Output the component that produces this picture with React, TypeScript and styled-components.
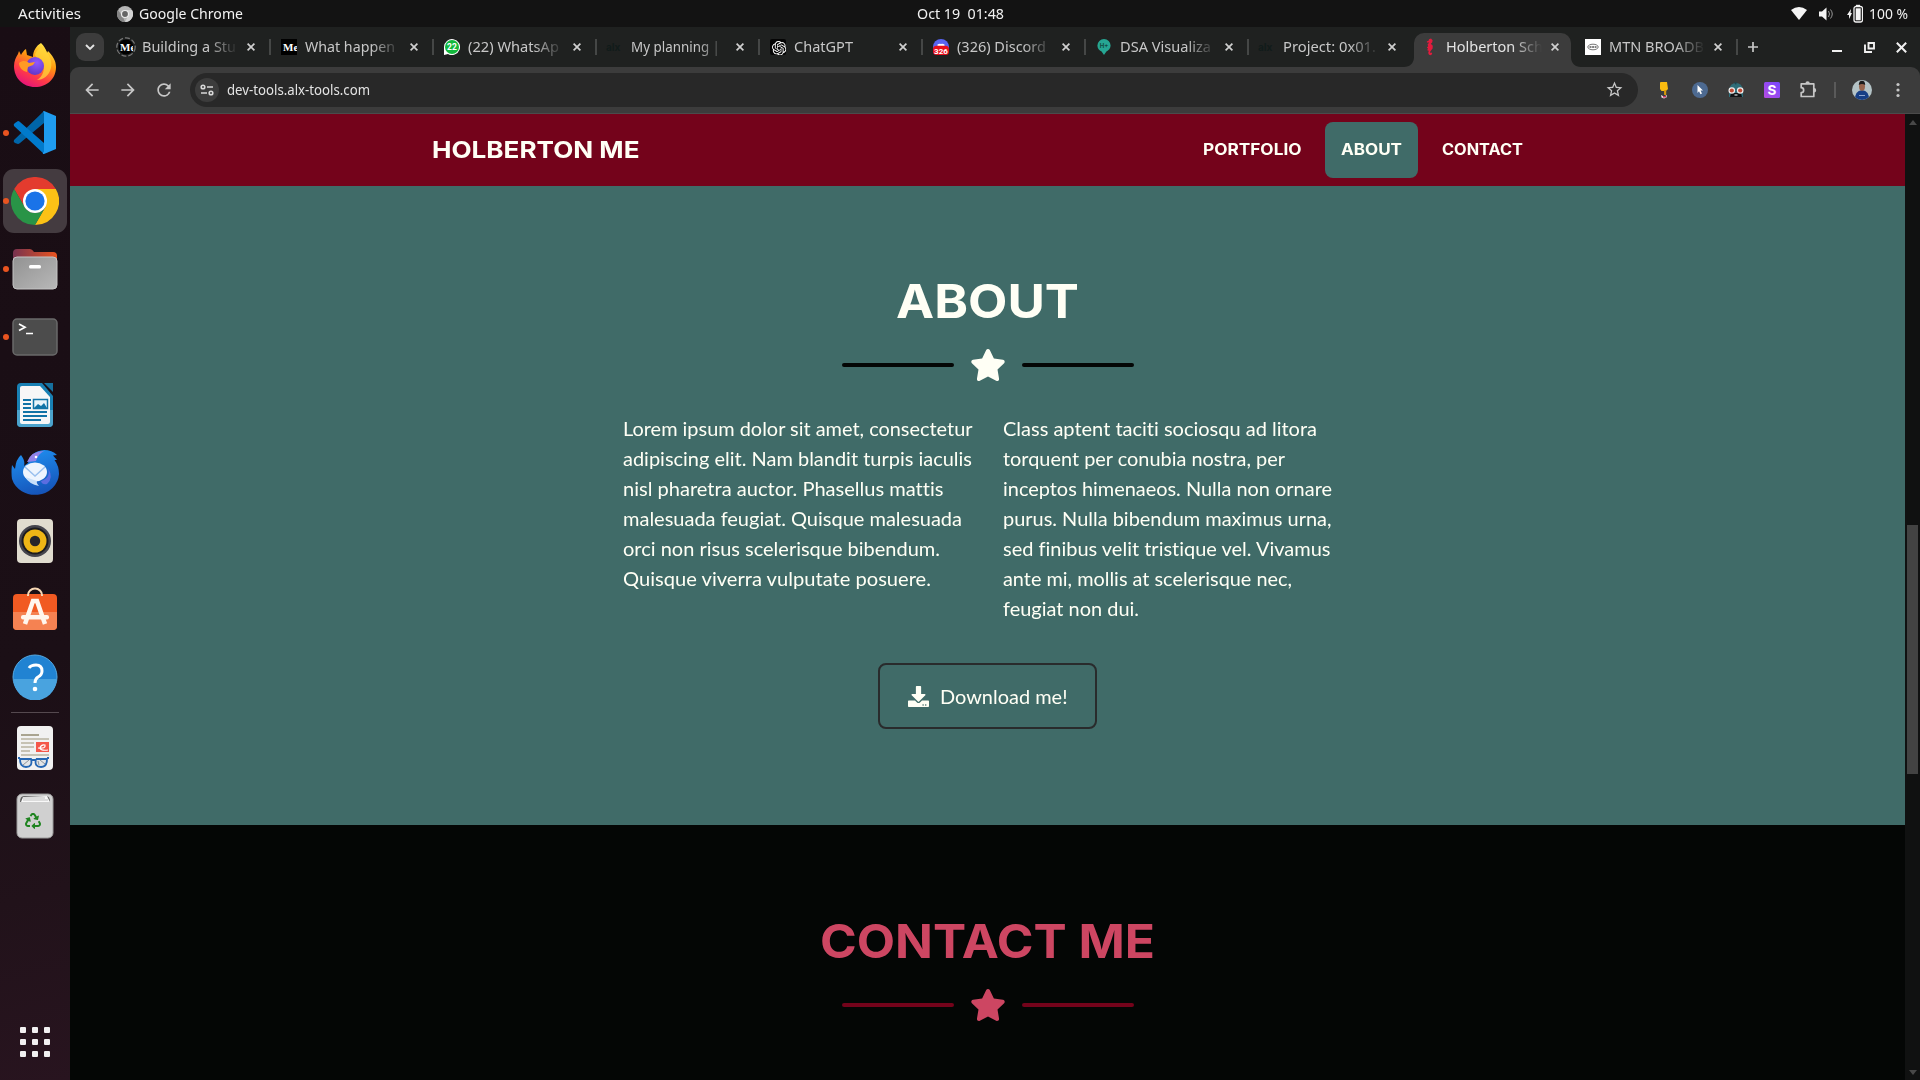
import React, { useLayoutEffect, useRef } from "react";
import styled, { createGlobalStyle } from "styled-components";
import { FaStar, FaDownload, FaRecycle } from "react-icons/fa";
import { SiOpenai } from "react-icons/si";
import { MdStarBorder, MdArrowBack, MdArrowForward, MdRefresh } from "react-icons/md";

const UI = `"Noto Sans", "Open Sans", sans-serif`;
const HEAD = `Inter, "Open Sans", sans-serif`;

const Global = createGlobalStyle`
  *, *::before, *::after { box-sizing: border-box; }
  body { margin: 0; background: #040605; overflow: hidden; font-family: ${UI}; }
  svg { display: block; flex: none; }
`;

/* Text set to an exact advance width, whatever face is available. */
const FitBox = styled.span<{ $w: number }>`
  display: block;
  flex: none;
  width: ${(p) => p.$w}px;
  white-space: pre;
`;
const FitText = styled.span`
  display: inline-block;
  transform-origin: 0 50%;
`;
function Fit({ w, children }: { w: number; children: React.ReactNode }) {
  const ref = useRef<HTMLSpanElement>(null);
  useLayoutEffect(() => {
    const el = ref.current;
    if (el && el.offsetWidth) {
      el.style.transform = "none";
      el.style.transform = `scaleX(${w / el.getBoundingClientRect().width})`;
    }
  }, [w]);
  return (
    <FitBox $w={w}>
      <FitText ref={ref}>{children}</FitText>
    </FitBox>
  );
}

const Desktop = styled.div`
  width: 1920px;
  height: 1080px;
  display: grid;
  grid-template: 27px 1053px / 70px 1850px;
`;

/* ---------- system panel ---------- */
const Panel = styled.header`
  grid-column: 1 / 3;
  display: grid;
  grid-template-columns: 1fr 87px 1fr;
  align-items: center;
  background: #131313;
  color: #f2f2f2;
  font-size: 14.4px;
  line-height: 26px;
`;
const PanelLeft = styled.div`
  display: flex;
  align-items: center;
  padding-left: 18px;
`;
const PanelApp = styled.div`
  display: flex;
  align-items: center;
  gap: 6px;
  margin-left: 36px;
`;
const PanelRight = styled.div`
  display: flex;
  align-items: center;
  justify-content: flex-end;
  padding-right: 12px;
`;
const PanelIcon = styled.span<{ $gap: number }>`
  margin-right: ${(p) => p.$gap}px;
`;

/* ---------- dock ---------- */
const Dock = styled.nav`
  display: flex;
  flex-direction: column;
  align-items: center;
  padding: 6px 0 17px;
  background: linear-gradient(165deg, #190d14 0%, #1b0f16 60%, #21121a 82%, #28141f 100%);
`;
const DockItem = styled.div<{ $active?: boolean; $running?: boolean }>`
  position: relative;
  flex: none;
  display: flex;
  align-items: center;
  justify-content: center;
  width: 64px;
  height: 64px;
  margin-bottom: 4px;
  border-radius: 11px;
  background: ${(p) => (p.$active ? "#443b40" : "transparent")};
  &::before {
    content: "";
    display: ${(p) => (p.$running ? "block" : "none")};
    position: absolute;
    left: 0;
    top: 29px;
    width: 6px;
    height: 6px;
    border-radius: 50%;
    background: #e95420;
  }
`;
const DockRule = styled.div`
  width: 48px;
  height: 1px;
  margin: -1px 0 3px;
  background: #55494f;
`;
const AppGrid = styled.div`
  display: grid;
  grid-template-columns: repeat(3, 6px);
  gap: 6px;
  margin-top: auto;
  margin-bottom: 6px;
`;
const AppDot = styled.i`
  width: 6px;
  height: 6px;
  border-radius: 1px;
  background: #f2f0f1;
`;

/* ---------- browser ---------- */
const Browser = styled.main`
  display: flex;
  flex-direction: column;
  min-width: 0;
  background: #1f2120;
`;
const TabStrip = styled.div`
  display: flex;
  height: 40px;
  padding: 0 0 0 6px;
`;
const TabSearch = styled.div`
  display: flex;
  align-items: center;
  justify-content: center;
  width: 28px;
  height: 28px;
  margin: 6px 3px 0 0;
  border-radius: 9px;
  background: #3c3c3c;
`;
const TabBox = styled.div<{ $active?: boolean; $sep?: boolean }>`
  position: relative;
  flex: none;
  display: flex;
  align-items: center;
  width: 163px;
  height: 40px;
  padding: 0 12px 0 11px;
  color: ${(p) => (p.$active ? "#e3e3e3" : "#c7c7c7")};
  font-size: 14.4px;
  line-height: 20px;
  &::after {
    content: "";
    display: ${(p) => (p.$sep ? "block" : "none")};
    position: absolute;
    right: -1px;
    top: 12px;
    width: 2px;
    height: 16px;
    background: #454746;
  }
`;
const ActiveShape = styled.svg`
  position: absolute;
  left: -7px;
  top: 6px;
`;
const Favicon = styled.span`
  position: relative;
  flex: none;
  display: flex;
  align-items: center;
  justify-content: center;
  width: 16px;
  height: 16px;
  overflow: visible;
`;
const TabTitle = styled.span`
  position: relative;
  flex: none;
  width: 100px;
  margin-left: 8px;
  overflow: hidden;
  mask-image: linear-gradient(90deg, #000 66px, transparent 96px);
`;
const TabClose = styled.span`
  position: relative;
  margin-left: 5px;
`;
const StripEnd = styled.div`
  display: flex;
  align-items: center;
  flex: 1;
  padding-left: 9px;
`;
const WindowButtons = styled.div`
  display: flex;
  align-items: center;
  gap: 21px;
  margin-left: auto;
  padding-right: 13px;
`;
const Toolbar = styled.div`
  display: flex;
  align-items: center;
  height: 47px;
  padding: 0 12px 1px 12px;
  border-bottom: 1px solid #4b4b4b;
  border-radius: 9px 9px 0 0;
  background: #3c3c3c;
`;
const NavButtons = styled.div`
  flex: none;
  display: flex;
  gap: 16px;
  width: 108px;
  color: #c7c7c7;
`;
const Omnibox = styled.div`
  flex: none;
  display: flex;
  align-items: center;
  width: 1448px;
  height: 34px;
  padding: 0 14px 0 5px;
  border-radius: 17px;
  background: #282828;
  color: #e3e3e3;
  font-size: 14.4px;
  line-height: 20px;
`;
const SiteChip = styled.span`
  display: flex;
  align-items: center;
  justify-content: center;
  width: 24px;
  height: 24px;
  margin-right: 8px;
  border-radius: 50%;
  background: #3c3c3c;
`;
const Bookmark = styled.span`
  margin-left: auto;
  color: #c7c7c7;
`;
const Extensions = styled.div`
  display: flex;
  align-items: center;
  gap: 16px;
  margin-left: 16px;
`;
const ToolRule = styled.i`
  width: 2px;
  height: 16px;
  background: #5a5a5a;
`;
const Viewport = styled.div`
  flex: 1;
  display: grid;
  grid-template-columns: 1835px 15px;
  min-height: 0;
`;
const ScrollTrack = styled.div`
  display: flex;
  flex-direction: column;
  align-items: center;
  background: #101111;
`;
const ScrollArrow = styled.i<{ $down?: boolean }>`
  margin-top: ${(p) => (p.$down ? "auto" : "6px")};
  margin-bottom: ${(p) => (p.$down ? "5px" : "0")};
  border: 4px solid transparent;
  border-top: ${(p) => (p.$down ? "5px solid #484848" : "0")};
  border-bottom: ${(p) => (p.$down ? "0" : "5px solid #484848")};
`;
const ScrollThumb = styled.i`
  width: 11px;
  height: 249px;
  margin-top: 400px;
  background: #434343;
`;

/* ---------- page ---------- */
const Page = styled.div`
  display: flex;
  flex-direction: column;
  overflow: hidden;
  background: #040605;
  color: #fffff5;
`;
const SiteNav = styled.header`
  display: flex;
  align-items: center;
  justify-content: space-between;
  height: 72px;
  padding: 0 366px 0 362px;
  background: #74031b;
  font-family: ${HEAD};
  font-weight: 700;
`;
const Brand = styled.div`
  font-size: 23.4px;
  line-height: 36px;
  margin-bottom: 1px;
`;
const NavLinks = styled.div`
  display: flex;
  gap: 8px;
`;
const NavLink = styled.a<{ $on?: boolean }>`
  display: flex;
  align-items: center;
  height: 56px;
  padding: 0 16px 2px;
  border-radius: 8px;
  background: ${(p) => (p.$on ? "#406b68" : "transparent")};
  font-size: 15.6px;
`;
const Section = styled.section<{ $bg: string; $fg: string; $h: number; $top: number }>`
  display: flex;
  flex-direction: column;
  align-items: center;
  flex: none;
  height: ${(p) => p.$h}px;
  padding-top: ${(p) => p.$top}px;
  background: ${(p) => p.$bg};
  color: ${(p) => p.$fg};
`;
const Heading = styled.h2`
  margin: 0;
  font-family: ${HEAD};
  font-size: 46.500px;
  font-weight: 700;
  line-height: 58px;
`;
const Divider = styled.div`
  display: flex;
  align-items: center;
  gap: 16px;
  height: 36px;
  margin-top: 17px;
`;
const Bar = styled.i<{ $c: string }>`
  width: 112px;
  height: 4px;
  border-radius: 2px;
  background: ${(p) => p.$c};
`;
const Columns = styled.div`
  display: grid;
  grid-template-columns: 356px 356px;
  gap: 24px;
  width: 736px;
  margin: 30px 0 40px 6px;
  font: 400 20px/30px Lato, sans-serif;
  font-variant-ligatures: none;
`;
const Para = styled.p`
  margin: 0;
`;
const Download = styled.a`
  display: flex;
  align-items: center;
  gap: 11px;
  height: 66px;
  width: 219px;
  padding-left: 28px;
  border: 2px solid #292b2c;
  border-radius: 8px;
  font: 400 20px/30px Lato, sans-serif;
`;

const Med = ({ ring }: { ring?: boolean }) => (
  <svg width={ring ? 20 : 16} height={ring ? 20 : 16} viewBox={ring ? "-2 -2 20 20" : "0 0 16 16"}>
    <clipPath id={ring ? "medR" : "medS"}>
      <rect x={ring ? 1 : 0} width={ring ? 14 : 16} height="16" />
    </clipPath>
    {ring && <circle cx="8" cy="8" r="9.200" fill="none" stroke="#777" strokeWidth="1.200" strokeDasharray="5 2" />}
    {ring ? <circle cx="8" cy="8" r="7.500" fill="#000" /> : <rect width="16" height="16" fill="#000" />}
    <g clipPath={ring ? "url(#medR)" : "url(#medS)"}>
      <text x="2" y="12" fontFamily="Liberation Serif, serif" fontWeight="700" fontSize="11" fill="#fff">
        Me
      </text>
    </g>
  </svg>
);
const Alx = () => (
  <svg width="20" height="16" viewBox="0 0 20 16">
    <text x="1" y="12" fontFamily="Inter, sans-serif" fontWeight="700" fontSize="10" fill="#111b1a">
      alx
    </text>
  </svg>
);
const WhatsApp = () => (
  <svg width="16" height="16" viewBox="0 0 16 16">
    <path d="M0 16V8a8 8 0 1 1 4 7z" fill="#fff" />
    <circle cx="8" cy="8" r="7" fill="#12b83c" />
    <text x="8" y="11" textAnchor="middle" fontFamily="Roboto, sans-serif" fontWeight="700" fontSize="8.500" fill="#fff">
      22
    </text>
  </svg>
);
const Gpt = () => (
  <svg width="16" height="16" viewBox="0 0 16 16">
    <rect width="16" height="16" rx="2" fill="#050505" />
    <SiOpenai x="2" y="2" width="12" height="12" color="#fff" />
  </svg>
);
const Discord = () => (
  <svg width="16" height="18" viewBox="0 0 16 18">
    <circle cx="8" cy="9" r="8" fill="#5865f2" />
    <path d="M4.500 6.500q1.500-1 3.500-.6 2-.4 3.500.6V9h-7z" fill="#fff" />
    <rect y="7.800" width="16" height="9.200" rx="3.500" fill="#e8101c" />
    <text x="8" y="15.500" textAnchor="middle" fontFamily="Roboto, sans-serif" fontWeight="700" fontSize="8" fill="#fff">
      326
    </text>
  </svg>
);
const Dsa = () => (
  <svg width="14" height="16" viewBox="0 0 14 16">
    <path d="M7 0a6.600 6.600 0 0 1 6.600 6.600c0 3-2 4.900-4.200 6L7 16l-2.400-3.400C2.200 11.500.4 9.600.4 6.600A6.600 6.600 0 0 1 7 0z" fill="#26a693" />
    <text x="7" y="9" textAnchor="middle" fontFamily="Inter, sans-serif" fontWeight="700" fontSize="6" fill="#124a42">
      H+
    </text>
  </svg>
);
const Seahorse = () => (
  <svg width="8" height="18" viewBox="0 0 8 18">
    <path
      d="M3 1.200 5 .6 6.600 2.200 6.200 4.600 4.800 5.800 6.800 7.800 6.600 10.400 5 12.400 4 14 4.600 15 5.800 14.600 6.200 15.800 5 17.200 3 16.800 2.200 15 2.800 12.800 1.200 12.200 2 10.600.8 9.400 2.200 8.200 1.600 6.400 3.200 4.600 1 4.400.8 3.400 2.600 2.800z"
      fill="#e31b3d"
    />
  </svg>
);
const Mtn = () => (
  <svg width="16" height="16" viewBox="0 0 16 16">
    <rect width="16" height="16" fill="#fff" />
    <ellipse cx="8" cy="8" rx="5.200" ry="2.800" fill="none" stroke="#777" />
    <path d="M4.500 8h7" stroke="#555" strokeWidth="1.600" strokeDasharray="2 .6" />
  </svg>
);

type TabData = { icon: React.ReactNode; title: string; w: number; active?: boolean; nosep?: boolean };
const TABS: TabData[] = [
  { icon: <Med ring />, title: "Building a Stu", w: 94 },
  { icon: <Med />, title: "What happen", w: 90 },
  { icon: <WhatsApp />, title: "(22) WhatsAp", w: 91 },
  { icon: <Alx />, title: "My planning |", w: 89 },
  { icon: <Gpt />, title: "ChatGPT", w: 59 },
  { icon: <Discord />, title: "(326) Discord", w: 89 },
  { icon: <Dsa />, title: "DSA Visualiza", w: 91 },
  { icon: <Alx />, title: "Project: 0x01.", w: 93, nosep: true },
  { icon: <Seahorse />, title: "Holberton Sch", w: 97, active: true, nosep: true },
  { icon: <Mtn />, title: "MTN BROADB", w: 95 },
];

const Cross = ({ s = 8, sw = 1.7, c = "#d0d0d0" }: { s?: number; sw?: number; c?: string }) => (
  <svg width={s} height={s} viewBox="0 0 8 8">
    <path d="M.6.6l6.800 6.800M7.400.6L.6 7.400" stroke={c} strokeWidth={(sw * 8) / s} />
  </svg>
);

function Tab({ t }: { t: TabData }) {
  return (
    <TabBox $active={t.active} $sep={!t.nosep}>
      {t.active && (
        <ActiveShape width="177" height="34" viewBox="0 0 177 34">
          <path d="M0 34C6 34 10 30 10 24V10A10 10 0 0 1 20 0H157A10 10 0 0 1 167 10V24C167 30 171 34 177 34Z" fill="#3c3c3c" />
        </ActiveShape>
      )}
      <Favicon>{t.icon}</Favicon>
      <TabTitle>
        <Fit w={t.w}>{t.title}</Fit>
      </TabTitle>
      <TabClose>
        <Cross />
      </TabClose>
    </TabBox>
  );
}

/* ---------- dock artwork ---------- */
const Firefox = () => (
  <svg width="44" height="44" viewBox="0 0 44 44">
    <defs>
      <linearGradient id="ffA" x1=".8" y1="0" x2=".3" y2="1">
        <stop offset="0" stopColor="#fff44f" />
        <stop offset=".4" stopColor="#ff980e" />
        <stop offset=".72" stopColor="#ff3b47" />
        <stop offset="1" stopColor="#e5127d" />
      </linearGradient>
      <radialGradient id="ffB" cx=".6" cy=".3" r=".8">
        <stop offset="0" stopColor="#9059ff" />
        <stop offset="1" stopColor="#5b32c0" />
      </radialGradient>
    </defs>
    <path d="M28 0c3 3 5 6 6 10l1-2c4 4 8 9 8 16 0 12-9 20-21 20S1 35 1 23c0-5 2-9 4-12l1-3 2 4c1-2 3-5 5-6l1 6 6 2c0-6 3-11 8-14z" fill="url(#ffA)" />
    <path d="M30 4c5 5 10 14 8 21-2 8-8 12-14 12 6-4 8-10 6-16-3-4-7-6-8-9 1-4 4-7 8-8z" fill="#ffd53a" opacity=".75" />
    <circle cx="22" cy="23" r="9" fill="url(#ffB)" />
    <path d="M6 20c4-3 8-2 10 0l6-1-2 3-5 2-1 5C9 28 6 24 6 20z" fill="#ff9a24" />
  </svg>
);
const VsCode = () => (
  <svg width="44" height="44" viewBox="0 0 44 44">
    <path d="M1 29q-1 2 1 3l3 1q1 0 2-1L31 12V0L1 29z" fill="#0065a9" />
    <path d="M1 15q-1-2 1-3l3-2q1 0 2 1L31 32v11L1 15z" fill="#007acc" />
    <path d="M31 0 43 5V38L31 43C29 43 30 41 31 41V2C30 1 30 0 31 0z" fill="#1f9cf0" />
  </svg>
);
const Chrome = () => (
  <svg width="48" height="48" viewBox="0 0 48 48">
    <path d="M24 24 3.200 12A24 24 0 0 1 44.800 12Z" fill="#e33b2e" />
    <path d="M24 12H44.800A24 24 0 0 1 24 48L34.400 30Z" fill="#fbc116" />
    <path d="M3.200 12 13.600 30 24 24V12Z" fill="#e33b2e" />
    <path d="M3.200 12 13.600 30A12 12 0 0 0 34.400 30L24 48A24 24 0 0 1 3.200 12Z" fill="#299447" />
    <circle cx="24" cy="24" r="12" fill="#fff" />
    <circle cx="24" cy="24" r="9.600" fill="#1a73e8" />
  </svg>
);
const Files = () => (
  <svg width="46" height="42" viewBox="0 0 46 42">
    <defs>
      <linearGradient id="flA" x2="1">
        <stop offset="0" stopColor="#77324f" />
        <stop offset="1" stopColor="#e95420" />
      </linearGradient>
      <linearGradient id="flB" x2="1" y2="1">
        <stop offset="0" stopColor="#929292" />
        <stop offset="1" stopColor="#b8b8b8" />
      </linearGradient>
    </defs>
    <path d="M1 5q0-4 4-4h13q2 0 4 3h19q4 0 4 4v14H1z" fill="url(#flA)" />
    <rect x="1" y="9" width="44" height="32" rx="4" fill="url(#flB)" stroke="#c4c4c4" />
    <rect x="17" y="17" width="12" height="3.500" rx="1.500" fill="#fff" />
  </svg>
);
const Terminal = () => (
  <svg width="46" height="38" viewBox="0 0 46 38">
    <rect x="1" y="1" width="44" height="36" rx="4" fill="#4c4c4c" stroke="#6a6a6a" strokeWidth="1.500" />
    <path d="m7 6 6 3.200-6 3.200M14 15.500h7" fill="none" stroke="#fff" strokeWidth="1.700" />
  </svg>
);
const Writer = () => (
  <svg width="38" height="46" viewBox="0 0 38 46">
    <path d="M5 1H26L37 14V41Q37 45 33 45H5Q1 45 1 41V5Q1 1 5 1Z" fill="#1880b4" />
    <path d="M1 28H37V41Q37 45 33 45H5Q1 45 1 41Z" fill="#4ba3cc" />
    <path d="M28 1H37V10Z" fill="#16719f" />
    <path d="M6 4H24L34 15V40Q34 42 32 42H6Q4 42 4 40V6Q4 4 6 4Z" fill="#f7f7f7" />
    <path d="M7 18h8M7 22h8M7 26h8M7 30h24M7 34h24M7 38h18" stroke="#1173a6" strokeWidth="2" />
    <rect x="17.500" y="17.500" width="14" height="9" fill="#e9f4fa" stroke="#1173a6" strokeWidth="1.500" />
    <path d="m18 26 4-4 3 2 3-3 3 5z" fill="#1173a6" />
  </svg>
);
const Thunderbird = () => (
  <svg width="48" height="46" viewBox="0 0 48 46">
    <defs>
      <linearGradient id="tbA" x1=".3" y1="0" x2=".6" y2="1">
        <stop offset="0" stopColor="#1f8ff0" />
        <stop offset="1" stopColor="#1553b8" />
      </linearGradient>
    </defs>
    <path
      d="M10 5C13 9 14 12 13 16L17 13Q20 1 33 0Q41 0 46 5L42 5.500 46 10 43.500 10Q48 16 48 24A24 22 0 0 1 1 29Q0 22 1 15L4 19Q5 9 10 5z"
      fill="url(#tbA)"
    />
    <path d="M16 12Q20 1 33 1q-6 3-8 10z" fill="#9283e8" />
    <circle cx="25" cy="7" r="1.300" fill="#fff" />
    <path d="M30 31q10-3 7-13 6 10-1 16-5 1-6-3z" fill="#5b6de0" />
    <ellipse cx="24" cy="22" rx="12" ry="9.500" fill="#eef5fe" />
    <path d="M14 27q4 7 14 9-3-3-2-5z" fill="#c8e0fa" />
    <path d="m14 17 10 9 10-9" fill="none" stroke="#9ac0ee" strokeWidth="1.500" />
  </svg>
);
const Rhythmbox = () => (
  <svg width="38" height="46" viewBox="0 0 38 46">
    <rect x="1" y="1" width="36" height="44" rx="4" fill="#e0dccf" />
    <circle cx="19" cy="23" r="16" fill="#45454d" />
    <circle cx="19" cy="23" r="13.500" fill="#1c1c20" />
    <circle cx="19" cy="23" r="11.500" fill="#eeb616" />
    <circle cx="19" cy="23" r="5.200" fill="#26262a" />
  </svg>
);
const Software = () => (
  <svg width="46" height="44" viewBox="0 0 46 44">
    <rect x="1" y="7" width="44" height="36" rx="4" fill="#f15a22" />
    <path d="M1 25H45V39Q45 43 41 43H5Q1 43 1 39Z" fill="#f58252" />
    <path d="M16 9V8a7 6.500 0 0 1 14 0v1" fill="none" stroke="#f7d7b4" strokeWidth="2" />
    <path d="M13 37 21 14h4l8 23" fill="none" stroke="#fff6ee" strokeWidth="4.500" />
    <rect x="9" y="28" width="28" height="4.500" rx="2" fill="#fff6ee" />
  </svg>
);
const Help = () => (
  <svg width="46" height="46" viewBox="0 0 46 46">
    <circle cx="23" cy="23" r="22" fill="#2183d2" stroke="#55a9e2" />
    <path d="M1.500 25H44.500A21.500 21.500 0 0 1 1.500 25z" fill="#49a3df" />
    <path d="M17 14q2-3 7-3 6 0 6 6 0 4-4 6-3 2-3 6" fill="none" stroke="#fff" strokeWidth="3" />
    <circle cx="23" cy="35" r="2.300" fill="#fff" />
  </svg>
);
const Evince = () => (
  <svg width="38" height="46" viewBox="0 0 38 46">
    <rect x="1" y="1" width="36" height="44" rx="4" fill="#f1f1f1" />
    <path d="M5 10h18" stroke="#a9a490" strokeWidth="2" />
    <path d="M5 14h28M5 18h13M5 22h13M5 26h9M5 30h28" stroke="#c6c2b4" strokeWidth="2" />
    <rect x="20" y="17" width="13" height="10" fill="#f4574a" />
    <path d="M22 23q8 1 7-3-4-1-5 3 1 3 8 2" fill="none" stroke="#fff" strokeWidth="1.200" />
    <path
      d="M4 34h11q2 8-5 8-6 0-6-8M20 34h11q0 8-6 8-7 0-5-8M15 35h5M2 33h2M31 33h2"
      fill="#d8dde2"
      fillOpacity=".6"
      stroke="#2567b4"
      strokeWidth="1.800"
    />
    <path d="m7 40 6-5M23 40l-1-4M24 35l5 4" stroke="#8d949b" strokeWidth="1" />
  </svg>
);
const Trash = () => (
  <svg width="38" height="46" viewBox="0 0 38 46">
    <rect x="1" y="1" width="36" height="44" rx="5" fill="#d0d0d0" stroke="#9b9b9b" />
    <path d="M4 9q0-6 4-6h22q4 0 4 6z" fill="#5f5f5f" />
    <path d="M5 9l2-5 24-1 3 6z" fill="#f8f8f8" />
    <path d="M7 5h22M7 7h25" stroke="#aaa" strokeWidth=".7" />
    <FaRecycle x="9" y="20" width="20" height="20" color="#1f8420" />
  </svg>
);

const DOCK = [
  { icon: <Firefox /> },
  { icon: <VsCode />, running: true },
  { icon: <Chrome />, running: true, active: true },
  { icon: <Files />, running: true },
  { icon: <Terminal />, running: true },
  { icon: <Writer /> },
  { icon: <Thunderbird /> },
  { icon: <Rhythmbox /> },
  { icon: <Software /> },
  { icon: <Help /> },
];

const LEFT_LINES: [string, number][] = [
  ["Lorem ipsum dolor sit amet, consectetur", 349.5],
  ["adipiscing elit. Nam blandit turpis iaculis", 349],
  ["nisl pharetra auctor. Phasellus mattis", 320.5],
  ["malesuada feugiat. Quisque malesuada", 339],
  ["orci non risus scelerisque bibendum.", 317],
  ["Quisque viverra vulputate posuere.", 308],
];
const RIGHT_LINES: [string, number][] = [
  ["Class aptent taciti sociosqu ad litora", 314],
  ["torquent per conubia nostra, per", 282],
  ["inceptos himenaeos. Nulla non ornare", 329],
  ["purus. Nulla bibendum maximus urna,", 328.5],
  ["sed finibus velit tristique vel. Vivamus", 327.5],
  ["ante mi, mollis at scelerisque nec,", 289],
  ["feugiat non dui.", 136],
];
const Lines = ({ rows }: { rows: [string, number][] }) => (
  <Para>
    {rows.map(([text, w]) => (
      <Fit key={text} w={w}>
        {text}
      </Fit>
    ))}
  </Para>
);

const TitleRow = ({ text, w, bar }: { text: string; w: number; bar: string }) => (
  <>
    <Heading>
      <Fit w={w}>{text}</Fit>
    </Heading>
    <Divider>
      <Bar $c={bar} />
      <FaStar size={36} />
      <Bar $c={bar} />
    </Divider>
  </>
);

export default function App() {
  return (
    <>
      <Global />
      <Desktop>
        <Panel>
          <PanelLeft>
            <Fit w={63}>Activities</Fit>
            <PanelApp>
              <svg width="16" height="16" viewBox="0 0 16 16">
                <circle cx="8" cy="8" r="8" fill="#b5b5b5" />
                <path d="M1 4 6 11 8 16A8 8 0 0 1 1 4z" fill="#858585" />
                <path d="M8 4h7a8 8 0 0 1-7 12l3-6z" fill="#d4d4d4" />
                <circle cx="8" cy="8" r="3.500" fill="#666" stroke="#eee" strokeWidth="1.200" />
              </svg>
              <Fit w={104}>Google Chrome</Fit>
            </PanelApp>
          </PanelLeft>
          <Fit w={87}>Oct 19  01:48</Fit>
          <PanelRight>
            <PanelIcon $gap={12}>
              <svg width="16" height="13" viewBox="0 0 16 13">
                <path d="M0 3Q8-3 16 3L8 13z" fill="#f4f4f4" />
              </svg>
            </PanelIcon>
            <PanelIcon $gap={13}>
              <svg width="15" height="14" viewBox="0 0 15 14">
                <path d="M0 4.500h3L7.500.5v13L3 9.500H0z" fill="#f4f4f4" />
                <path d="M9.500 4q2 3 0 6M11.500 2.500q3.500 4.500 0 9" fill="none" stroke="#999" />
              </svg>
            </PanelIcon>
            <PanelIcon $gap={6}>
              <svg width="16" height="19" viewBox="0 0 16 19">
                <path d="M4 5 0 11h2v4l3-6H3.500z" fill="#f4f4f4" />
                <path d="M9 2V.8h4V2" fill="#f4f4f4" />
                <rect x="7" y="2.500" width="8.500" height="15.500" rx="2" fill="none" stroke="#f4f4f4" strokeWidth="1.300" />
                <rect x="8.700" y="4.300" width="5" height="12" fill="#f4f4f4" />
              </svg>
            </PanelIcon>
            <Fit w={39}>100 %</Fit>
          </PanelRight>
        </Panel>

        <Dock>
          {DOCK.map((d, i) => (
            <DockItem key={i} $active={d.active} $running={d.running}>
              {d.icon}
            </DockItem>
          ))}
          <DockRule />
          <DockItem>
            <Evince />
          </DockItem>
          <DockItem>
            <Trash />
          </DockItem>
          <AppGrid>
            {Array.from({ length: 9 }, (_, i) => (
              <AppDot key={i} />
            ))}
          </AppGrid>
        </Dock>

        <Browser>
          <TabStrip>
            <TabSearch>
              <svg width="10" height="7" viewBox="0 0 10 7">
                <path d="m1 1 4 4 4-4" fill="none" stroke="#e3e3e3" strokeWidth="1.900" />
              </svg>
            </TabSearch>
            {TABS.map((t) => (
              <Tab key={t.title} t={t} />
            ))}
            <StripEnd>
              <svg width="14" height="14" viewBox="0 0 14 14">
                <path d="M2 7h10M7 2v10" stroke="#c7c7c7" strokeWidth="1.700" />
              </svg>
              <WindowButtons>
                <svg width="12" height="12" viewBox="0 0 12 12">
                  <path d="M1 10h10" stroke="#f0f0f0" strokeWidth="2" />
                </svg>
                <svg width="11" height="11" viewBox="0 0 11 11">
                  <path d="M4.500 1h5.500v5.500H4.500zM1 2.500V10h7" fill="none" stroke="#f0f0f0" strokeWidth="1.900" />
                </svg>
                <Cross s={11} sw={2} c="#f0f0f0" />
              </WindowButtons>
            </StripEnd>
          </TabStrip>

          <Toolbar>
            <NavButtons>
              <MdArrowBack size={20} />
              <MdArrowForward size={20} />
              <MdRefresh size={20} />
            </NavButtons>
            <Omnibox>
              <SiteChip>
                <svg width="14" height="12" viewBox="0 0 14 12">
                  <g fill="none" stroke="#d8d8d8" strokeWidth="1.600">
                    <circle cx="3" cy="3" r="1.800" />
                    <circle cx="11" cy="9" r="1.800" />
                    <path d="M7 3h6M1 9h6" />
                  </g>
                </svg>
              </SiteChip>
              <Fit w={143}>dev-tools.alx-tools.com</Fit>
              <Bookmark>
                <MdStarBorder size={19} />
              </Bookmark>
            </Omnibox>
            <Extensions>
              <svg width="20" height="20" viewBox="0 0 20 20">
                <path d="M6 2.500 7 2h6l1 7-1.500 1.500H12V14h-1.500v-3H7.500L6 9z" fill="#fbbc10" />
                <path d="M10.200 10h2v5h-2z" fill="#d9980c" />
                <path d="m7 15 3 1.500 3-1.500-.5 2.500L10 18.500 7.500 17.500z" fill="#eddbe2" />
                <path d="M9 16h3v1.500H9z" fill="#c2305a" />
              </svg>
              <svg width="20" height="20" viewBox="0 0 20 20">
                <circle cx="10" cy="10" r="8" fill="#4d6a91" />
                <path d="m7.500 5 5.500 5.500h-2.500l1.500 3-1.500.7-1.500-3L7.500 13z" fill="#fff" />
              </svg>
              <svg width="20" height="20" viewBox="0 0 20 20">
                <path d="M3 10Q4 3 10 3t7 7v7H3z" fill="#2f6d78" />
                <path d="M8 2.500 11 2l-1 3z" fill="#1c4650" />
                <path d="M5 13h10l1 4H4z" fill="#101214" />
                <circle cx="5.800" cy="10.500" r="3.300" fill="#eee" />
                <circle cx="14.200" cy="10.500" r="3.300" fill="#eee" />
                <circle cx="5.800" cy="10.500" r="2.100" fill="#c04a34" />
                <circle cx="14.200" cy="10.500" r="2.100" fill="#c04a34" />
                <path d="M8.500 15h3" stroke="#ddd" strokeWidth="1.200" />
              </svg>
              <svg width="20" height="20" viewBox="0 0 20 20">
                <defs>
                  <linearGradient id="sx" x1="1" x2="0" y2="1">
                    <stop offset="0" stopColor="#7547ff" />
                    <stop offset="1" stopColor="#b64de0" />
                  </linearGradient>
                </defs>
                <rect x="2" y="2" width="16" height="16" rx="1.500" fill="url(#sx)" />
                <text x="10" y="14.800" textAnchor="middle" fontFamily="Inter, sans-serif" fontWeight="700" fontSize="13.500" fill="#fff">
                  S
                </text>
              </svg>
              <svg width="20" height="20" viewBox="0 0 20 20">
                <path
                  d="M3.200 3.800H15.800V16.500H3.200V12.600A2.400 2.400 0 0 0 3.200 7.700Z"
                  fill="none"
                  stroke="#c7c7c7"
                  strokeWidth="1.700"
                  strokeLinejoin="round"
                />
                <path d="M7.400 3.500a2.200 2.200 0 0 1 4.400 0zM16 8a2.200 2.200 0 0 1 0 4.400z" fill="#c7c7c7" />
              </svg>
              <ToolRule />
              <svg width="20" height="20" viewBox="0 0 20 20">
                <clipPath id="av">
                  <circle cx="10" cy="10" r="10" />
                </clipPath>
                <g clipPath="url(#av)">
                  <rect width="20" height="20" fill="#b4c3c6" />
                  <path d="M3 20q-.5-9 7-10 7.500 1 7 10z" fill="#173f86" />
                  <ellipse cx="10" cy="6.500" rx="3" ry="4.200" fill="#96644c" />
                  <path d="M6.800 5q0-4.300 3.200-4.300t3.200 4.300q-3.200-2-6.400 0z" fill="#1b1b1b" />
                  <path d="M7 15.500h6" stroke="#8fa6cf" strokeWidth="1.200" />
                </g>
              </svg>
              <svg width="20" height="20" viewBox="0 0 20 20">
                <g fill="#c7c7c7">
                  <circle cx="10" cy="4.500" r="1.600" />
                  <circle cx="10" cy="10" r="1.600" />
                  <circle cx="10" cy="15.500" r="1.600" />
                </g>
              </svg>
            </Extensions>
          </Toolbar>

          <Viewport>
            <Page>
              <SiteNav>
                <Brand>
                  <Fit w={207.5}>HOLBERTON ME</Fit>
                </Brand>
                <NavLinks>
                  <NavLink>
                    <Fit w={98.5}>PORTFOLIO</Fit>
                  </NavLink>
                  <NavLink $on>
                    <Fit w={61}>ABOUT</Fit>
                  </NavLink>
                  <NavLink>
                    <Fit w={81}>CONTACT</Fit>
                  </NavLink>
                </NavLinks>
              </SiteNav>
              <Section $bg="#406b68" $fg="#fffff5" $h={639} $top={86}>
                <TitleRow text="ABOUT" w={183} bar="#040605" />
                <Columns>
                  <Lines rows={LEFT_LINES} />
                  <Lines rows={RIGHT_LINES} />
                </Columns>
                <Download>
                  <FaDownload size={21} />
                  <Fit w={127.5}>Download me!</Fit>
                </Download>
              </Section>
              <Section $bg="#040605" $fg="#cd4662" $h={255} $top={87}>
                <TitleRow text="CONTACT ME" w={335} bar="#74031b" />
              </Section>
            </Page>
            <ScrollTrack>
              <ScrollArrow />
              <ScrollThumb />
              <ScrollArrow $down />
            </ScrollTrack>
          </Viewport>
        </Browser>
      </Desktop>
    </>
  );
}
